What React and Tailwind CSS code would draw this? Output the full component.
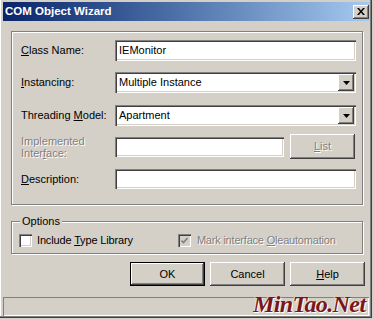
const sunken = 'shadow-[inset_1px_1px_0_#808080,inset_2px_2px_0_#404040,inset_-1px_-1px_0_#ffffff,inset_-2px_-2px_0_#d4d0c8]'
const raised = 'shadow-[inset_-1px_-1px_0_#404040,inset_1px_1px_0_#ffffff,inset_-2px_-2px_0_#808080,inset_2px_2px_0_#d4d0c8]'
const etched = 'border border-[#808080] shadow-[1px_1px_0_#ffffff,inset_1px_1px_0_#ffffff]'
const greyText = 'text-[#808080] [text-shadow:1px_1px_0_#ffffff]'

function Arrow() {
  return (
    <div className={`w-[16px] h-[17px] bg-[#d4d0c8] flex items-center justify-center ${raised}`}>
      <svg width="7" height="4" viewBox="0 0 7 4">
        <path d="M0 0h7L3.5 4z" fill="#000" />
      </svg>
    </div>
  )
}

function Select({ value }) {
  return (
    <div className={`flex-1 h-[21px] bg-white flex items-center justify-between pl-[4px] pr-[2px] ${sunken}`}>
      <span>{value}</span>
      <Arrow />
    </div>
  )
}

function Row({ label, children, className = '' }) {
  return (
    <div className={`flex items-center ${className}`}>
      <div className="w-[94px] shrink-0">{label}</div>
      {children}
    </div>
  )
}

function Button({ children, def, disabled }) {
  return (
    <button
      className={`w-[75px] h-[24px] bg-[#d4d0c8] flex items-center justify-center ${def ? 'border border-black' : ''} ${raised} ${disabled ? greyText : 'text-black'}`}
    >
      {children}
    </button>
  )
}

export default function App() {
  return (
    <div className="w-[374px] h-[319px] bg-[#d4d0c8] overflow-hidden relative font-['Liberation_Sans',Arial,sans-serif] text-[11px] text-black">
      <div className="w-[372px] h-[318px] pt-[2px] pl-[3px] shadow-[inset_-1px_-1px_0_#404040,inset_-2px_-2px_0_#808080,inset_1px_0_0_#ffffff]">
        <div className="w-[367px] h-[19px] flex items-center justify-between pl-[2px] pr-[1px] bg-gradient-to-r from-[#0a246a] to-[#a6caf0]">
          <span className="text-white font-bold text-[11.5px]">COM Object Wizard</span>
          <div className={`w-[16px] h-[14px] bg-[#d4d0c8] flex items-center justify-center ${raised}`}>
            <svg width="8" height="7" viewBox="0 0 8 7">
              <path d="M0 0h2l2 2.5L6 0h2L5 3.5 8 7H6L4 4.5 2 7H0l3-3.5z" fill="#000" />
            </svg>
          </div>
        </div>

        <div className="pl-[8px] pt-[10px]">
          <div className={`w-[352px] h-[174px] pt-[8px] pl-[9px] pr-[6px] ${etched}`}>
            <Row label={<span><u>C</u>lass Name:</span>}>
              <div className={`flex-1 h-[21px] bg-white flex items-center pl-[4px] ${sunken}`}>IEMonitor</div>
            </Row>
            <Row className="mt-[11px]" label={<span><u>I</u>nstancing:</span>}>
              <Select value="Multiple Instance" />
            </Row>
            <Row className="mt-[12px]" label={<span>Threading <u>M</u>odel:</span>}>
              <Select value="Apartment" />
            </Row>
            <Row className="mt-[8px] h-[25px]" label={<div className={`leading-[12px] ${greyText}`}>Implemented<br />Inter<u>f</u>ace:</div>}>
              <div className={`w-[170px] h-[20px] bg-white ${sunken}`} />
              <div className="ml-[6px] pr-[1px]">
                <button className={`w-[65px] h-[25px] bg-[#d4d0c8] ${raised} ${greyText}`}><u>L</u>ist</button>
              </div>
            </Row>
            <Row className="mt-[10px]" label={<span><u>D</u>escription:</span>}>
              <div className={`flex-1 h-[20px] bg-white ${sunken}`} />
            </Row>
          </div>

          <div className={`relative mt-[16px] w-[352px] h-[33px] pt-[10px] pl-[7px] ${etched}`}>
            <span className="absolute -top-[8px] left-[8px] px-[2px] bg-[#d4d0c8] leading-[14px]">Options</span>
            <div className="flex items-center">
              <div className={`w-[13px] h-[13px] bg-white ${sunken}`} />
              <span className="ml-[5px] tracking-[-0.15px]">Include <u>T</u>ype Library</span>
              <div className={`ml-[45px] w-[13px] h-[13px] bg-[#d4d0c8] flex items-center justify-center ${sunken}`}>
                <svg width="7" height="7" viewBox="0 0 7 7">
                  <path d="M0.5 3.5l2 2 4-4.5" stroke="#808080" strokeWidth="1.6" fill="none" />
                </svg>
              </div>
              <span className={`ml-[6px] tracking-[-0.2px] ${greyText}`}>Mark interface <u>O</u>leautomation</span>
            </div>
          </div>

          <div className="mt-[8px] ml-[119px] flex gap-[5px]">
            <Button def>OK</Button>
            <Button>Cancel</Button>
            <Button><u>H</u>elp</Button>
          </div>
        </div>

        <div className="mt-[11px] w-[366px] h-[19px] shadow-[inset_1px_1px_0_#808080,inset_-1px_-1px_0_#ffffff]" />
      </div>

      <span className="absolute left-[253px] top-[292px] leading-none text-[24px] tracking-[-0.6px] italic font-bold font-['Liberation_Serif',serif] text-[#7a1619] [text-shadow:1px_1px_0_#ffffff,-1px_0_0_#e8e4dc]">
        MinTao.Net
      </span>
    </div>
  )
}
